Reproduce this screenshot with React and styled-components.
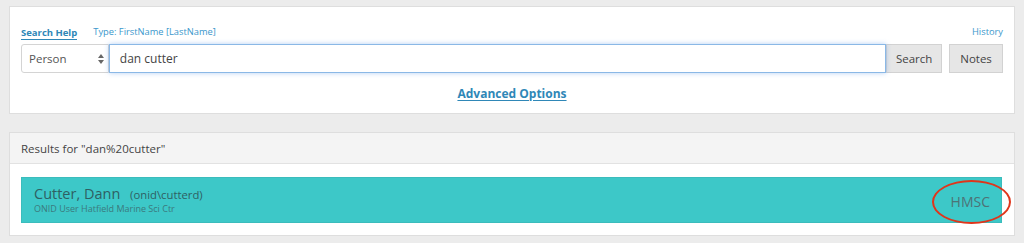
import styled, { createGlobalStyle } from 'styled-components';

const GlobalStyle = createGlobalStyle`
	html, body {
		margin: 0;
		padding: 0;
		background: #ececec;
		font-family: 'Open Sans', 'Liberation Sans', sans-serif;
	}
`;

export default function App() {
	return (
		<>
			<GlobalStyle />
			<Page>
				<Panel>
					<HelpRow>
						<HelpLink>Search Help</HelpLink>
						<Hint>Type: FirstName [LastName]</Hint>
						<Spacer />
						<Hint>History</Hint>
					</HelpRow>
					<SearchRow>
						<Select>
							<span>Person</span>
							<Arrows>
								<svg width="6" height="10" viewBox="0 0 6 10">
									<path d="M3 0 L6 4 H0 Z M3 10 L6 6 H0 Z" fill="#666" />
								</svg>
							</Arrows>
						</Select>
						<Input>dan cutter</Input>
						<Button>Search</Button>
						<Button $gap>Notes</Button>
					</SearchRow>
					<Advanced>Advanced Options</Advanced>
				</Panel>
				<Results>
					<ResultsHeader>Results for "dan%20cutter"</ResultsHeader>
					<ResultsBody>
						<Person>
							<PersonInfo>
								<Name>
									Cutter, Dann <Onid>(onid\cutterd)</Onid>
								</Name>
								<Sub>ONID User Hatfield Marine Sci Ctr</Sub>
							</PersonInfo>
							<Dept>
								HMSC
								<Circle />
							</Dept>
						</Person>
					</ResultsBody>
				</Results>
			</Page>
		</>
	);
}

const Page = styled.div`
	display: flex;
	flex-direction: column;
	gap: 18px;
	padding: 6px 9px 0 9px;
`;

const Panel = styled.div`
	background: #fff;
	border: 1px solid #dedede;
	height: 108px;
	padding: 0 11px;
	box-sizing: border-box;
	display: flex;
	flex-direction: column;
`;

const HelpRow = styled.div`
	display: flex;
	align-items: flex-end;
	gap: 16px;
	margin-top: 17px;
	height: 16px;
`;

const Spacer = styled.div`
	flex: 1;
`;

const HelpLink = styled.span`
	font-size: 9.5px;
	font-weight: 700;
	color: #2f87b7;
	border-bottom: 1px solid #2f87b7;
	line-height: 13px;
`;

const Hint = styled.span`
	font-size: 9.3px;
	color: #3a97cc;
	line-height: 14px;
	padding-bottom: 1px;
`;

const SearchRow = styled.div`
	display: flex;
	margin-top: 4px;
	height: 29px;
`;

const Select = styled.div`
	width: 88px;
	box-sizing: border-box;
	border: 1px solid #d4d4d4;
	border-radius: 3px 0 0 3px;
	display: flex;
	align-items: center;
	justify-content: space-between;
	padding: 0 4px 0 7px;
	font-size: 11.5px;
	color: #555;
	background: #fff;
`;

const Arrows = styled.span`
	display: flex;
`;

const Input = styled.div`
	width: 779px;
	box-sizing: border-box;
	border: 1px solid #8ab8e6;
	box-shadow: 0 0 5px rgba(90, 150, 230, 0.45);
	display: flex;
	align-items: center;
	padding-left: 10px;
	font-size: 12px;
	color: #444;
	background: #fff;
	z-index: 1;
`;

const Button = styled.div`
	box-sizing: border-box;
	border: 1px solid #d2d2d2;
	background: #e6e6e6;
	display: flex;
	align-items: center;
	justify-content: center;
	font-size: 11.5px;
	color: #444;
	padding: 0 6px;
	margin-left: ${(props) => (props.$gap ? '7px' : '0')};
	width: ${(props) => (props.$gap ? '54px' : '56px')};
`;

const Advanced = styled.div`
	align-self: center;
	margin-top: 12px;
	font-size: 12px;
	font-weight: 700;
	color: #2f87b7;
	text-decoration: underline;
	text-underline-offset: 2px;
`;

const Results = styled.div`
	background: #fff;
	border: 1px solid #dedede;
	width: 100%;
	box-sizing: border-box;
`;

const ResultsHeader = styled.div`
	background: #f4f4f4;
	border-bottom: 1px solid #e2e2e2;
	height: 31px;
	box-sizing: border-box;
	padding-left: 11px;
	display: flex;
	align-items: center;
	font-size: 11.5px;
	color: #444;
`;

const ResultsBody = styled.div`
	padding: 13px 12px 12px 11px;
`;

const Person = styled.div`
	background: #3dc8c8;
	border: 1px solid #3bbcbc;
	height: 46px;
	box-sizing: border-box;
	display: flex;
	align-items: center;
	justify-content: space-between;
	padding: 0 11px 0 12px;
`;

const PersonInfo = styled.div`
	display: flex;
	flex-direction: column;
	margin-top: -3px;
`;

const Name = styled.div`
	font-size: 14.5px;
	color: #2f5f63;
	line-height: 19px;
`;

const Onid = styled.span`
	font-size: 11.3px;
	margin-left: 6px;
`;

const Sub = styled.div`
	font-size: 9px;
	color: #3b7a7d;
	line-height: 10px;
`;

const Dept = styled.div`
	position: relative;
	font-size: 14px;
	color: #4d7376;
	margin-top: 3px;
`;

const Circle = styled.span`
	position: absolute;
	left: -19px;
	top: -12px;
	width: 79px;
	height: 44px;
	border: 2px solid #e0351b;
	border-radius: 50%;
	box-sizing: border-box;
`;
